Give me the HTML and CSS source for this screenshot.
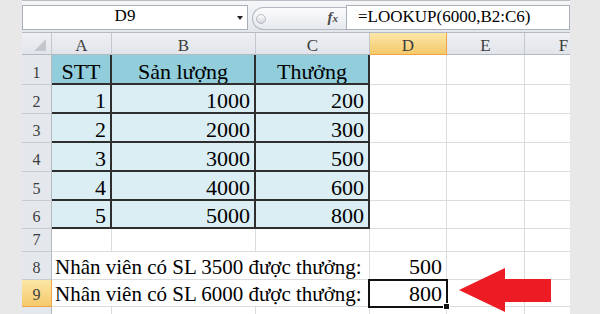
FILE: index.html
```html
<html>

<head>
  <title>LOOKUP</title>
  <link rel="stylesheet" href="styles.css">
</head>

<body>
  <div class="window">
    <div class="formula-bar">
      <div class="name-box">
        <span class="cell-ref">D9</span>
        <span class="drop"></span>
      </div>
      <div class="fx-area">
        <span class="grip"></span>
        <span class="fx">f<small>x</small></span>
      </div>
      <div class="formula">=LOOKUP(6000,B2:C6)</div>
    </div>

    <div class="sheet">
      <div class="hd corner"><span class="tri"></span></div>
      <div class="hd">A</div>
      <div class="hd">B</div>
      <div class="hd">C</div>
      <div class="hd active">D</div>
      <div class="hd">E</div>
      <div class="hd">F</div>

      <div class="rh">1</div>
      <div class="c t th">STT</div>
      <div class="c t th">Sản lượng</div>
      <div class="c t th">Thưởng</div>
      <div class="c"></div>
      <div class="c"></div>
      <div class="c"></div>

      <div class="rh">2</div>
      <div class="c t num">1</div>
      <div class="c t num">1000</div>
      <div class="c t num">200</div>
      <div class="c"></div>
      <div class="c"></div>
      <div class="c"></div>

      <div class="rh">3</div>
      <div class="c t num">2</div>
      <div class="c t num">2000</div>
      <div class="c t num">300</div>
      <div class="c"></div>
      <div class="c"></div>
      <div class="c"></div>

      <div class="rh">4</div>
      <div class="c t num">3</div>
      <div class="c t num">3000</div>
      <div class="c t num">500</div>
      <div class="c"></div>
      <div class="c"></div>
      <div class="c"></div>

      <div class="rh">5</div>
      <div class="c t num">4</div>
      <div class="c t num">4000</div>
      <div class="c t num">600</div>
      <div class="c"></div>
      <div class="c"></div>
      <div class="c"></div>

      <div class="rh">6</div>
      <div class="c t num">5</div>
      <div class="c t num">5000</div>
      <div class="c t num">800</div>
      <div class="c"></div>
      <div class="c"></div>
      <div class="c"></div>

      <div class="rh">7</div>
      <div class="c"></div>
      <div class="c"></div>
      <div class="c"></div>
      <div class="c"></div>
      <div class="c"></div>
      <div class="c"></div>

      <div class="rh">8</div>
      <div class="c wide">Nhân viên có SL 3500 được thưởng:</div>
      <div class="c num">500</div>
      <div class="c"></div>
      <div class="c"></div>

      <div class="rh active">9</div>
      <div class="c wide">Nhân viên có SL 6000 được thưởng:</div>
      <div class="c num selected">800</div>
      <div class="c"></div>
      <div class="c"></div>

      <div class="rh"></div>
      <div class="c"></div>
      <div class="c"></div>
      <div class="c"></div>
      <div class="c"></div>
      <div class="c"></div>
      <div class="c"></div>
    </div>
  </div>

  <svg class="arrow" width="600" height="314" viewBox="0 0 600 314">
    <polygon points="459,290 505,268 505,279 551,279 551,302 505,302 505,312" fill="#ed1c24" />
  </svg>
</body>

</html>
```

FILE: styles.css
```css
body {
  margin: 0;
  width: 600px;
  height: 314px;
  overflow: hidden;
  background: #e8e8e8;
  font-family: 'Liberation Serif', 'Times New Roman', serif;
  position: relative;
}

.window {
  margin-left: 22px;
  width: 548px;
  height: 314px;
  overflow: hidden;
}

/* formula bar */

.formula-bar {
  box-sizing: border-box;
  height: 33px;
  display: flex;
  align-items: flex-start;
  padding-top: 4px;
  background: linear-gradient(#f4f6f8, #e3e7ec);
  border-top: 1px solid #b9bec5;
  border-bottom: 1px solid #b4bac2;
}

.name-box {
  box-sizing: border-box;
  width: 226px;
  height: 25px;
  background: #fff;
  border: 1px solid #a9b0ba;
  display: flex;
  align-items: center;
  position: relative;
}

.cell-ref {
  flex: 1;
  text-align: center;
  padding-right: 20px;
  font-size: 17px;
  line-height: 20px;
  margin-top: -3px;
}

.drop {
  position: absolute;
  right: 4px;
  top: 10px;
  border-left: 3.5px solid transparent;
  border-right: 3.5px solid transparent;
  border-top: 4px solid #222;
}

.fx-area {
  box-sizing: border-box;
  width: 94px;
  height: 23px;
  margin: 2px 0 0 4px;
  border: 1px solid #b3b9c1;
  border-right: none;
  border-radius: 12px 0 0 12px;
  background: linear-gradient(#fbfbfc, #e6e9ed);
  display: flex;
  align-items: center;
  justify-content: space-between;
  padding: 0 8px 0 3px;
}

.grip {
  width: 8px;
  height: 8px;
  border-radius: 50%;
  border: 1px solid #b5bac1;
  background: linear-gradient(#fdfdfd, #d3d7dc);
}

.fx {
  font-style: italic;
  font-weight: bold;
  font-size: 15px;
  color: #4a4a4a;
  margin-top: -2px;
}

.fx small {
  font-size: 11px;
}

.formula {
  flex: 1;
  box-sizing: border-box;
  height: 25px;
  background: #fff;
  border: 1px solid #a9b0ba;
  padding-left: 11px;
  font-size: 17px;
  line-height: 22px;
}

/* grid */

.sheet {
  display: grid;
  grid-template-columns: 30px 60px 144px 114px 77px 78px 78px;
  grid-template-rows: 22px 30px repeat(5, 28.9px) 22.3px 28.3px 27.2px 12px;
}

.sheet > div {
  box-sizing: border-box;
  display: flex;
  align-items: flex-end;
  overflow: hidden;
  white-space: nowrap;
}

.hd {
  justify-content: center;
  background: linear-gradient(#eef0f3, #e1e4e9);
  border-right: 1px solid #c3c8ce;
  border-bottom: 1px solid #b3b9c1;
  color: #3d3d3d;
  font-size: 17px;
  line-height: 17px;
}

.corner {
  position: relative;
}

.tri {
  position: absolute;
  right: 5px;
  bottom: 3px;
  border-left: 12px solid transparent;
  border-bottom: 12px solid #c3c7cc;
}

.rh {
  justify-content: center;
  background: #e4e7ec;
  border-right: 1px solid #b3b9c1;
  border-bottom: 1px solid #c8ccd1;
  color: #3d3d3d;
  font-size: 16px;
  line-height: 22px;
}

.hd.active,
.rh.active {
  background: linear-gradient(#fce7a8, #f5c96a);
  border-color: #eea447;
}

.c {
  background: #fff;
  border-right: 1px solid #dadcdd;
  border-bottom: 1px solid #dadcdd;
  padding: 0 4px 1px;
  font-size: 22px;
  line-height: 22px;
}

.t {
  background: #daeef3;
  border-right: 2px solid #2e2e2e;
  border-bottom: 2px solid #2e2e2e;
  padding-bottom: 0;
}

.th {
  background: #92cddc;
  justify-content: center;
}

.num {
  justify-content: flex-end;
}

.sheet > .wide {
  grid-column: span 3;
  font-size: 21px;
  padding-left: 3px;
  overflow: visible;
}

.selected {
  position: relative;
  overflow: visible !important;
}

.selected::before {
  content: '';
  position: absolute;
  top: -1px;
  left: -2px;
  right: -2px;
  bottom: -2px;
  border: 2px solid #111;
}

.selected::after {
  content: '';
  position: absolute;
  right: -4px;
  bottom: -4px;
  width: 5px;
  height: 5px;
  background: #111;
  border: 1px solid #fff;
}

.arrow {
  position: absolute;
  left: 0;
  top: 0;
  pointer-events: none;
}
```
